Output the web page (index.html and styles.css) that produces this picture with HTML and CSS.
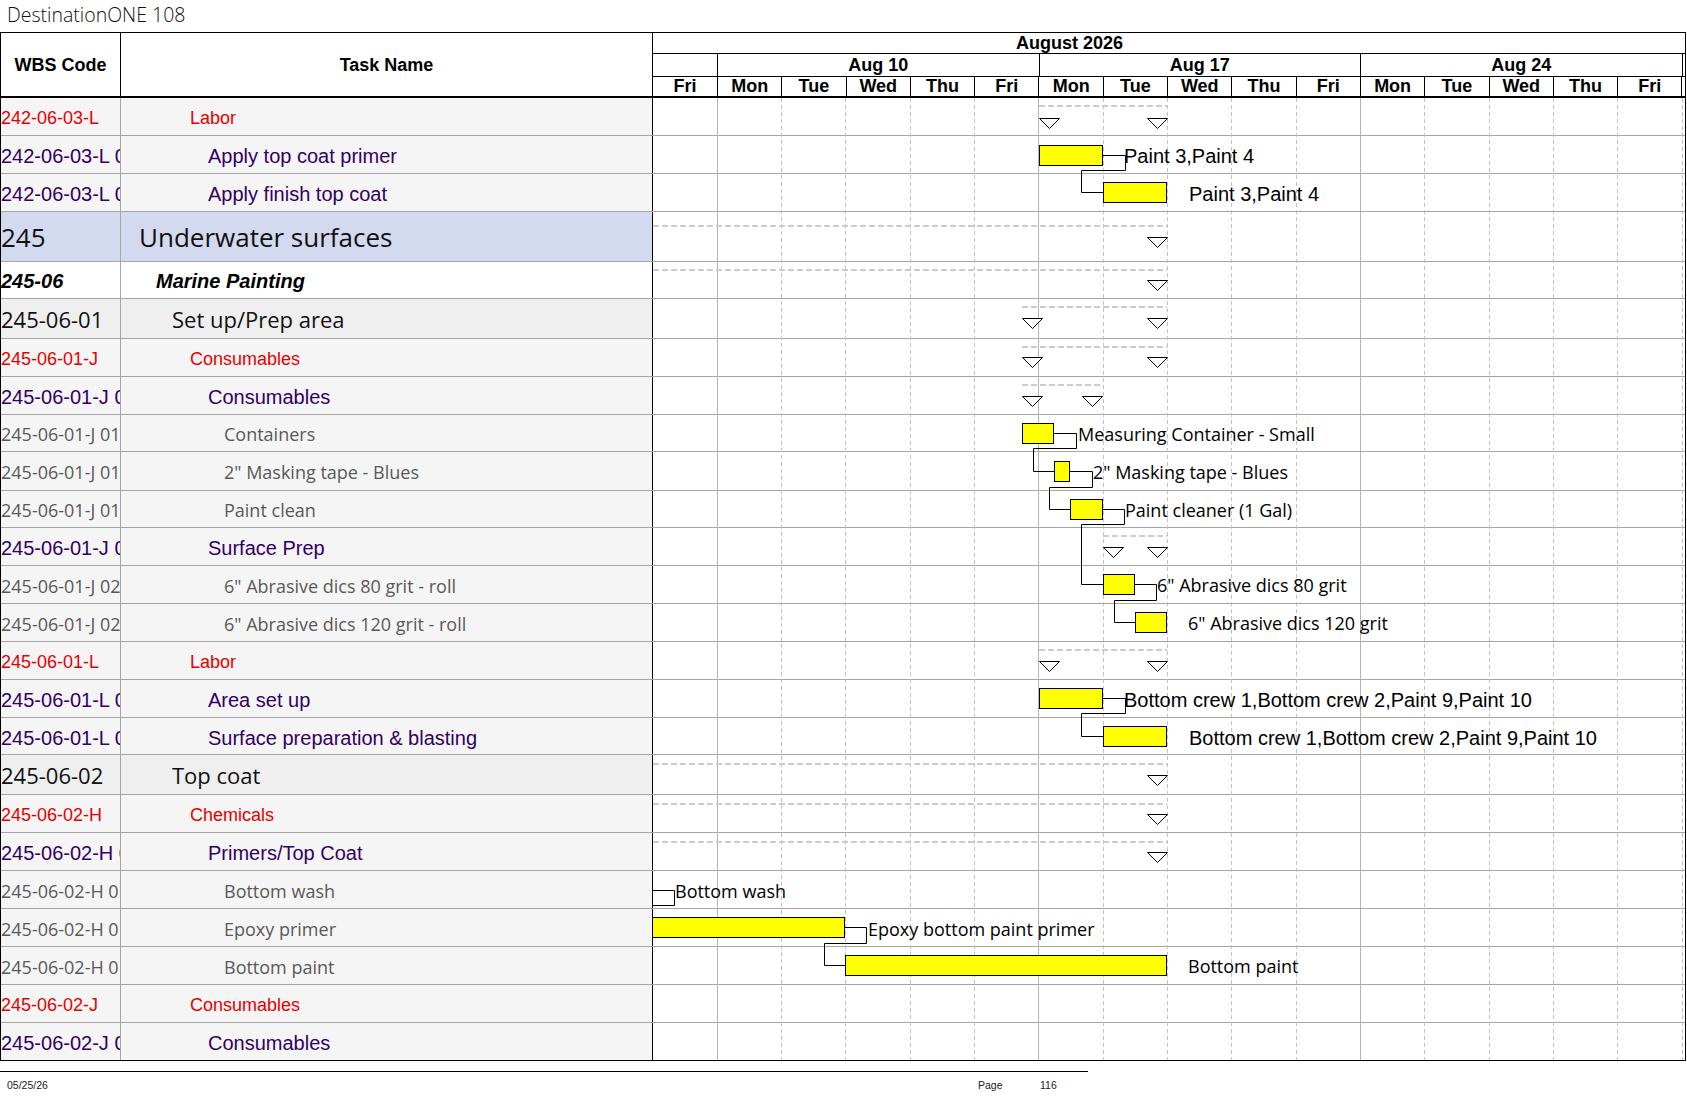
FILE: index.html
```html
<!DOCTYPE html>
<html lang="en">
<head>
<meta charset="utf-8">
<title>DestinationONE 108</title>
<link rel="stylesheet" href="styles.css">
</head>
<body>
<div class="title">DestinationONE 108</div>
<div class="sheet">
  <div class="head">
    <div class="h-wbs">WBS Code</div>
    <div class="h-task">Task Name</div>
    <div class="h-time">
      <div class="t-month">August 2026</div>
      <div class="t-weeks">
        <div class="wk"></div>
        <div class="wk">Aug 10</div>
        <div class="wk">Aug 17</div>
        <div class="wk">Aug 24</div>
        <div class="wk end"></div>
      </div>
      <div class="t-days">
        <div class="dy">Fri</div>
        <div class="dy">Mon</div><div class="dy">Tue</div><div class="dy">Wed</div><div class="dy">Thu</div><div class="dy">Fri</div>
        <div class="dy">Mon</div><div class="dy">Tue</div><div class="dy">Wed</div><div class="dy">Thu</div><div class="dy">Fri</div>
        <div class="dy">Mon</div><div class="dy">Tue</div><div class="dy">Wed</div><div class="dy">Thu</div><div class="dy">Fri</div>
        <div class="dy end"></div>
      </div>
    </div>
  </div>

  <div class="body">
    <div class="row red"><div class="wbs">242-06-03-L</div><div class="task">Labor</div><div class="gantt"></div></div>
    <div class="row pur"><div class="wbs">242-06-03-L 010</div><div class="task">Apply top coat primer</div><div class="gantt"></div></div>
    <div class="row pur"><div class="wbs">242-06-03-L 020</div><div class="task">Apply finish top coat</div><div class="gantt"></div></div>
    <div class="row big"><div class="wbs">245</div><div class="task">Underwater surfaces</div><div class="gantt"></div></div>
    <div class="row mar"><div class="wbs">245-06</div><div class="task">Marine Painting</div><div class="gantt"></div></div>
    <div class="row sub"><div class="wbs">245-06-01</div><div class="task">Set up/Prep area</div><div class="gantt"></div></div>
    <div class="row red"><div class="wbs">245-06-01-J</div><div class="task">Consumables</div><div class="gantt"></div></div>
    <div class="row pur"><div class="wbs">245-06-01-J 01</div><div class="task">Consumables</div><div class="gantt"></div></div>
    <div class="row gry h37"><div class="wbs">245-06-01-J 010</div><div class="task">Containers</div><div class="gantt"></div></div>
    <div class="row gry h39"><div class="wbs">245-06-01-J 011</div><div class="task">2" Masking tape - Blues</div><div class="gantt"></div></div>
    <div class="row gry h37"><div class="wbs">245-06-01-J 012</div><div class="task">Paint clean</div><div class="gantt"></div></div>
    <div class="row pur"><div class="wbs">245-06-01-J 02</div><div class="task">Surface Prep</div><div class="gantt"></div></div>
    <div class="row gry"><div class="wbs">245-06-01-J 020</div><div class="task">6" Abrasive dics 80 grit - roll</div><div class="gantt"></div></div>
    <div class="row gry"><div class="wbs">245-06-01-J 021</div><div class="task">6" Abrasive dics 120 grit - roll</div><div class="gantt"></div></div>
    <div class="row red"><div class="wbs">245-06-01-L</div><div class="task">Labor</div><div class="gantt"></div></div>
    <div class="row pur"><div class="wbs">245-06-01-L 01</div><div class="task">Area set up</div><div class="gantt"></div></div>
    <div class="row pur h37"><div class="wbs">245-06-01-L 02</div><div class="task">Surface preparation &amp; blasting</div><div class="gantt"></div></div>
    <div class="row sub"><div class="wbs">245-06-02</div><div class="task">Top coat</div><div class="gantt"></div></div>
    <div class="row red"><div class="wbs">245-06-02-H</div><div class="task">Chemicals</div><div class="gantt"></div></div>
    <div class="row pur"><div class="wbs">245-06-02-H 01</div><div class="task">Primers/Top Coat</div><div class="gantt"></div></div>
    <div class="row gry"><div class="wbs">245-06-02-H 010</div><div class="task">Bottom wash</div><div class="gantt"></div></div>
    <div class="row gry"><div class="wbs">245-06-02-H 011</div><div class="task">Epoxy primer</div><div class="gantt"></div></div>
    <div class="row gry"><div class="wbs">245-06-02-H 012</div><div class="task">Bottom paint</div><div class="gantt"></div></div>
    <div class="row red"><div class="wbs">245-06-02-J</div><div class="task">Consumables</div><div class="gantt"></div></div>
    <div class="row pur last"><div class="wbs">245-06-02-J 01</div><div class="task">Consumables</div><div class="gantt"></div></div>

    <svg class="chart" viewBox="652 98 1034 962" width="1034" height="962" xmlns="http://www.w3.org/2000/svg">
      <g class="gs">
        <line x1="717.5" y1="98" x2="717.5" y2="1060"/>
        <line x1="1038.5" y1="98" x2="1038.5" y2="1060"/>
        <line x1="1360.5" y1="98" x2="1360.5" y2="1060"/>
      </g>
      <g class="gd">
        <line x1="781.5" y1="98" x2="781.5" y2="1060"/>
        <line x1="845.5" y1="98" x2="845.5" y2="1060"/>
        <line x1="910.5" y1="98" x2="910.5" y2="1060"/>
        <line x1="974.5" y1="98" x2="974.5" y2="1060"/>
        <line x1="1103.5" y1="98" x2="1103.5" y2="1060"/>
        <line x1="1167.5" y1="98" x2="1167.5" y2="1060"/>
        <line x1="1231.5" y1="98" x2="1231.5" y2="1060"/>
        <line x1="1296.5" y1="98" x2="1296.5" y2="1060"/>
        <line x1="1424.5" y1="98" x2="1424.5" y2="1060"/>
        <line x1="1489.5" y1="98" x2="1489.5" y2="1060"/>
        <line x1="1553.5" y1="98" x2="1553.5" y2="1060"/>
        <line x1="1617.5" y1="98" x2="1617.5" y2="1060"/>
        <line x1="1682.5" y1="98" x2="1682.5" y2="1060"/>
      </g>

      <g class="sum">
        <line x1="1039" y1="106" x2="1167" y2="106"/>
        <line x1="653" y1="226" x2="1167" y2="226"/>
        <line x1="653" y1="270" x2="1167" y2="270"/>
        <line x1="1022" y1="307" x2="1167" y2="307"/>
        <line x1="1022" y1="347" x2="1167" y2="347"/>
        <line x1="1022" y1="385" x2="1102" y2="385"/>
        <line x1="1103" y1="536" x2="1167" y2="536"/>
        <line x1="1039" y1="650" x2="1167" y2="650"/>
        <line x1="653" y1="764" x2="1167" y2="764"/>
        <line x1="653" y1="804" x2="1167" y2="804"/>
        <line x1="653" y1="842" x2="1167" y2="842"/>
      </g>

      <g class="tri">
        <path d="M1039.5 118.5 h20 l-10 10 z"/>
        <path d="M1147.5 118.5 h20 l-10 10 z"/>
        <path d="M1147.5 237.5 h20 l-10 10 z"/>
        <path d="M1147.5 280.5 h20 l-10 10 z"/>
        <path d="M1022.5 318.5 h20 l-10 10 z"/>
        <path d="M1147.5 318.5 h20 l-10 10 z"/>
        <path d="M1022.5 357.5 h20 l-10 10 z"/>
        <path d="M1147.5 357.5 h20 l-10 10 z"/>
        <path d="M1022.5 396.5 h20 l-10 10 z"/>
        <path d="M1082.5 396.5 h20 l-10 10 z"/>
        <path d="M1103.5 547.5 h20 l-10 10 z"/>
        <path d="M1147.5 547.5 h20 l-10 10 z"/>
        <path d="M1039.5 661.5 h20 l-10 10 z"/>
        <path d="M1147.5 661.5 h20 l-10 10 z"/>
        <path d="M1147.5 775.5 h20 l-10 10 z"/>
        <path d="M1147.5 814.5 h20 l-10 10 z"/>
        <path d="M1147.5 852.5 h20 l-10 10 z"/>
      </g>

      <g class="lnk">
        <polyline points="1102,155.5 1125.5,155.5 1125.5,170.5 1081.5,170.5 1081.5,192.5 1103,192.5"/>
        <polyline points="1053,433.5 1076.5,433.5 1076.5,448.5 1033.5,448.5 1033.5,471.5 1054,471.5"/>
        <polyline points="1069,471.5 1092.5,471.5 1092.5,487.5 1049.5,487.5 1049.5,509.5 1070,509.5"/>
        <polyline points="1102,509.5 1124.5,509.5 1124.5,524.5 1081.5,524.5 1081.5,584.5 1103,584.5"/>
        <polyline points="1134,584.5 1156.5,584.5 1156.5,600.5 1114.5,600.5 1114.5,622.5 1135,622.5"/>
        <polyline points="1102,698.5 1125.5,698.5 1125.5,713.5 1081.5,713.5 1081.5,736.5 1103,736.5"/>
        <polyline points="652,890.5 674.5,890.5 674.5,905.5 652,905.5"/>
        <polyline points="845,927.5 866.5,927.5 866.5,943.5 824.5,943.5 824.5,965.5 845,965.5"/>
      </g>

      <g class="bar">
        <rect x="1039.5" y="145.5" width="63" height="20"/>
        <rect x="1103.5" y="182.5" width="63" height="20"/>
        <rect x="1022.5" y="423.5" width="31" height="20"/>
        <rect x="1054.5" y="461.5" width="15" height="20"/>
        <rect x="1070.5" y="499.5" width="32" height="20"/>
        <rect x="1103.5" y="574.5" width="31" height="20"/>
        <rect x="1135.5" y="612.5" width="31" height="20"/>
        <rect x="1039.5" y="688.5" width="63" height="20"/>
        <rect x="1103.5" y="726.5" width="63" height="20"/>
        <rect x="652.5" y="917.5" width="192" height="20"/>
        <rect x="845.5" y="955.5" width="321" height="20"/>
      </g>

      <g class="lbl-r">
        <text x="1124" y="163">Paint 3,Paint 4</text>
        <text x="1189" y="201">Paint 3,Paint 4</text>
        <text x="1124" y="707">Bottom crew 1,Bottom crew 2,Paint 9,Paint 10</text>
        <text x="1189" y="745">Bottom crew 1,Bottom crew 2,Paint 9,Paint 10</text>
      </g>
      <g class="lbl-m">
        <text x="1078" y="441">Measuring Container - Small</text>
        <text x="1093" y="479">2" Masking tape - Blues</text>
        <text x="1125" y="517">Paint cleaner (1 Gal)</text>
        <text x="1157" y="592">6" Abrasive dics 80 grit</text>
        <text x="1188" y="630">6" Abrasive dics 120 grit</text>
        <text x="675" y="898">Bottom wash</text>
        <text x="868" y="936">Epoxy bottom paint primer</text>
        <text x="1188" y="973">Bottom paint</text>
      </g>
    </svg>
  </div>
</div>
<div class="footer">
  <span class="f-date">05/25/26</span>
  <span class="f-page">Page</span>
  <span class="f-num">116</span>
</div>
</body>
</html>
```

FILE: styles.css
```css
* { box-sizing: border-box; }
html, body { margin: 0; padding: 0; }
body {
  width: 1687px;
  height: 1097px;
  overflow: hidden;
  background: #fff;
  color: #000;
  font-family: "Liberation Sans", Arial, sans-serif;
}

.title {
  height: 32px;
  line-height: 30px;
  padding-left: 7px;
  font-family: "Open Sans", "DejaVu Sans", sans-serif;
  font-weight: 300;
  font-size: 19.5px;
  color: #111;
}

.sheet {
  width: 1686px;
  border: 1px solid #000;
}

/* ---------- header ---------- */
.head {
  display: flex;
  height: 65px;
  border-bottom: 2px solid #000;
}
.h-wbs, .h-task {
  display: flex;
  align-items: center;
  justify-content: center;
  padding-top: 2px;
  font-weight: bold;
  font-size: 18px;
  border-right: 1px solid #000;
}
.h-wbs { width: 120px; }
.h-task { width: 532px; }
.h-time {
  flex: 1;
  display: flex;
  flex-direction: column;
}
.t-month {
  height: 21px;
  border-bottom: 1px solid #000;
  font-weight: bold;
  font-size: 18px;
  line-height: 20px;
  padding-left: 363px;
  white-space: nowrap;
}
.t-weeks {
  height: 23px;
  border-bottom: 1px solid #000;
  display: grid;
  grid-template-columns: 65px 321.5px 321.5px 321.5px 1fr;
}
.wk {
  border-right: 1px solid #000;
  text-align: center;
  font-weight: bold;
  font-size: 18px;
  line-height: 22px;
}
.t-days {
  flex: 1;
  display: grid;
  grid-template-columns: 65px repeat(15, 64.3px) 1fr;
}
.dy {
  border-right: 1px solid #000;
  text-align: center;
  font-weight: bold;
  font-size: 18px;
  line-height: 19px;
}
.wk.end, .dy.end { border-right: 0; }

/* ---------- body rows ---------- */
.body { position: relative; }
.row {
  display: flex;
  height: 38px;
  border-bottom: 1px solid #a6a6a6;
}
.row.h37 { height: 37px; }
.row.h39 { height: 39px; }
.row.last { height: 37px; border-bottom: 0; }

.wbs, .task {
  display: flex;
  align-items: center;
  white-space: nowrap;
  overflow: hidden;
  background: #f5f5f5;
}
.wbs {
  width: 120px;
  border-right: 1px solid #a6a6a6;
}
.task {
  width: 532px;
  border-right: 1px solid #000;
}
.gantt { flex: 1; background: #fff; }

/* row kinds */
.red { color: #e60000; font-size: 18px; }
.red .wbs, .red .task { padding-top: 4px; }
.red .task { padding-left: 69px; }

.pur { color: #330066; font-size: 20px; }
.pur .wbs, .pur .task { padding-top: 4px; }
.pur .task { padding-left: 87px; }

.gry {
  color: #595959;
  font-family: "Open Sans", "DejaVu Sans", sans-serif;
  font-size: 18px;
}
.gry .wbs, .gry .task { padding-top: 2px; }
.gry .task { padding-left: 103px; }

.big {
  height: 50px;
  color: #111;
  font-family: "Open Sans", "DejaVu Sans", sans-serif;
  font-size: 26px;
}
.big .wbs, .big .task { background: #d3d9ef; }
.big .task { padding-left: 18px; }

.mar {
  height: 37px;
  font-weight: bold;
  font-style: italic;
  font-size: 20px;
}
.mar .wbs, .mar .task { background: #fff; padding-top: 2px; }
.mar .task { padding-left: 35px; }

.sub {
  height: 40px;
  color: #111;
  font-family: "Open Sans", "DejaVu Sans", sans-serif;
  font-size: 22px;
}
.sub .wbs, .sub .task { background: #efefef; }
.sub .task { padding-left: 51px; }

/* ---------- chart overlay ---------- */
.chart {
  position: absolute;
  left: 651px;
  top: 0;
  pointer-events: none;
}
.gs line { stroke: #b4b4b4; stroke-width: 1; }
.gd line { stroke: #c2c2c2; stroke-width: 1; stroke-dasharray: 4 3; }
.sum line { stroke: #cccccc; stroke-width: 2; stroke-dasharray: 6 3; }
.tri path { fill: #fff; stroke: #000; stroke-width: 1; }
.lnk polyline { fill: none; stroke: #000; stroke-width: 1; }
.bar rect { fill: #ffff00; stroke: #000; stroke-width: 1; }
.lbl-r text {
  font-family: "Liberation Sans", Arial, sans-serif;
  font-size: 20px;
  fill: #000;
}
.lbl-m text {
  font-family: "Open Sans", "DejaVu Sans", sans-serif;
  font-size: 18px;
  fill: #000;
}

/* ---------- footer ---------- */
.footer {
  width: 1088px;
  margin-top: 10px;
  border-top: 1px solid #000;
  display: flex;
  padding-top: 7px;
  font-size: 10.5px;
  line-height: 12px;
  color: #222;
}
.f-date { width: 978px; padding-left: 7px; }
.f-page { width: 62px; }
```
